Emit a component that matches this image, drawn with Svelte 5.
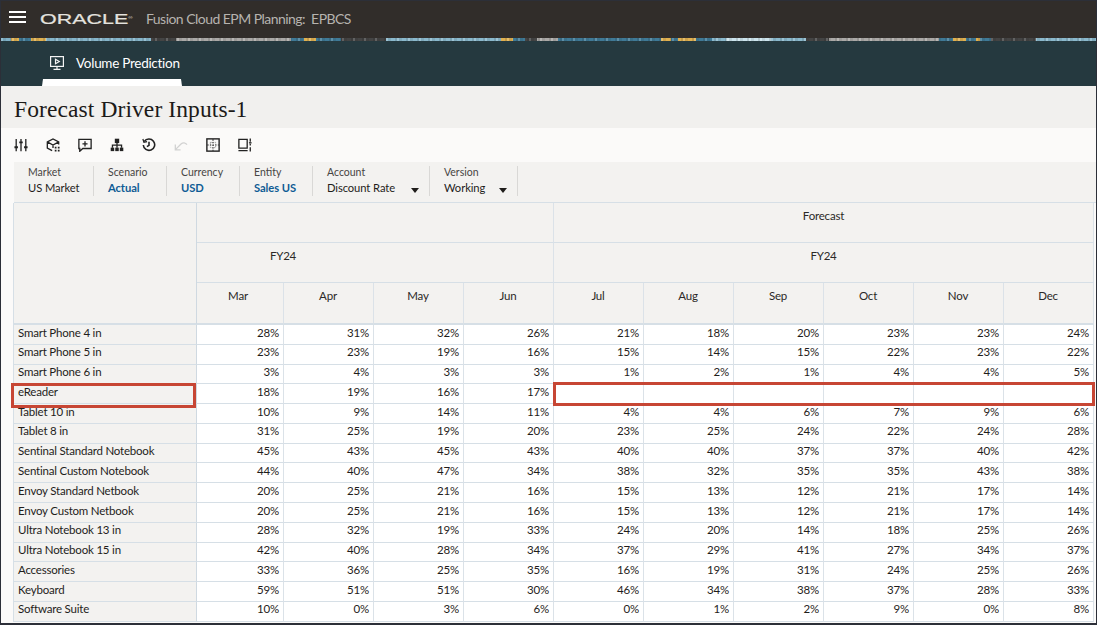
<script>
  const months = ['Mar','Apr','May','Jun','Jul','Aug','Sep','Oct','Nov','Dec'];
  const rows = [
    ['Smart Phone 4 in',[28,31,32,26,21,18,20,23,23,24]],
    ['Smart Phone 5 in',[23,23,19,16,15,14,15,22,23,22]],
    ['Smart Phone 6 in',[3,4,3,3,1,2,1,4,4,5]],
    ['eReader',[18,19,16,17,null,null,null,null,null,null]],
    ['Tablet 10 in',[10,9,14,11,4,4,6,7,9,6]],
    ['Tablet 8 in',[31,25,19,20,23,25,24,22,24,28]],
    ['Sentinal Standard Notebook',[45,43,45,43,40,40,37,37,40,42]],
    ['Sentinal Custom Notebook',[44,40,47,34,38,32,35,35,43,38]],
    ['Envoy Standard Netbook',[20,25,21,16,15,13,12,21,17,14]],
    ['Envoy Custom Netbook',[20,25,21,16,15,13,12,21,17,14]],
    ['Ultra Notebook 13 in',[28,32,19,33,24,20,14,18,25,26]],
    ['Ultra Notebook 15 in',[42,40,28,34,37,29,41,27,34,37]],
    ['Accessories',[33,36,25,35,16,19,31,24,25,26]],
    ['Keyboard',[59,51,51,30,46,34,38,37,28,33]],
    ['Software Suite',[10,0,3,6,0,1,2,9,0,8]],
  ];
  const filters = [
    {label:'Market',value:'US Market',w:80},
    {label:'Scenario',value:'Actual',w:73,link:true},
    {label:'Currency',value:'USD',w:73,link:true},
    {label:'Entity',value:'Sales US',w:73,link:true},
    {label:'Account',value:'Discount Rate',w:117,drop:true},
    {label:'Version',value:'Working',w:88,drop:true},
  ];
</script>

<div class="page">
  <header class="brand">
    <button class="burger" aria-label="Menu"><span></span><span></span><span></span></button>
    <span class="logo">ORACLE<sup>®</sup></span>
    <span class="product">Fusion Cloud EPM Planning:&nbsp; EPBCS</span>
  </header>
  <div class="strip"></div>
  <nav class="tabs">
    <div class="tab">
      <svg width="16" height="16" viewBox="0 0 16 16" fill="none" stroke="#f4f4f4" stroke-width="1.2"><rect x="1.6" y="1.6" width="12.8" height="9.8"/><path d="M6.5 4.2v4.6l3.8-2.3z"/><path d="M8 11.5v2.5M4.5 14.4h7"/></svg>
      <span>Volume Prediction</span>
    </div>
  </nav>
  <div class="tabnub"></div>
  <h1>Forecast Driver Inputs-1</h1>
  <div class="toolbar">
    <svg viewBox="0 0 16 16" fill="none" stroke="#222" stroke-width="1.5"><path d="M2.5 1v14M8 1v14M13.500 1v14"/><path d="M.5 10.500h4M6 5h4M11.500 10.500h4" stroke-width="2.200"/></svg>
    <svg viewBox="0 0 16 16" fill="none" stroke="#222" stroke-width="1.5"><path d="M7 14.500 1.500 11.500V4.500L8 1l6.500 3.500v3M1.500 4.500 8 8l6.500-3.500M8 8v3.500"/><path d="M10 10h2v2h-2zM13.500 10h2v2h-2zM10 13.500h2v2h-2zM13.500 13.500h2v2h-2z" fill="#222" stroke="none"/></svg>
    <svg viewBox="0 0 16 16" fill="none" stroke="#222" stroke-width="1.5"><path d="M1 1.500h14v10.500H5.500L2 15.200V12H1z"/><path d="M8 3.800v5.800M5.100 6.700h5.800"/></svg>
    <svg viewBox="0 0 16 16" fill="none" stroke="#222" stroke-width="1.5"><rect x="5.500" y=".8" width="5" height="5" fill="#222" stroke="none"/><rect x=".8" y="11" width="4" height="4" fill="#222" stroke="none"/><rect x="6" y="11" width="4" height="4" fill="#222" stroke="none"/><rect x="11.200" y="11" width="4" height="4" fill="#222" stroke="none"/><path d="M8 5v6M2.800 11V8.200h10.400V11"/></svg>
    <svg viewBox="0 0 16 16" fill="none" stroke="#222" stroke-width="1.800"><path d="M2.600 4A6.500 6.500 0 1 1 1.500 8"/><path d="M1 1.200 2.200 5l3.600-.9" stroke-width="1.400"/><path d="M8 4.200V8.400l-2.400 1.500"/></svg>
    <svg viewBox="0 0 16 16" fill="none" stroke="#d2d2d2" stroke-width="1.500"><path d="M1.500 7.500V13.500H7.500M1.900 13 8 6.800c2.400-2 5-1.600 6.800.8"/></svg>
    <svg viewBox="0 0 16 16" fill="none" stroke="#222" stroke-width="1.600"><rect x="1" y="1" width="14" height="14"/><path d="M8 1.500v13M1.500 8h13" stroke-width="1.300" stroke-dasharray="1.500 1.500"/><path d="M5 5h6v6H5z" stroke-width=".8" stroke="#777" stroke-dasharray="1.500 1"/></svg>
    <svg viewBox="0 0 16 16" fill="none" stroke="#222" stroke-width="1.500"><path d="M10.500 1.500H1v10h9.500z"/><path d="M.5 14.500h10.500M14 .5v3.800M14 6.500v2M14 10.500v5"/><path d="M12.500 5.500h3"/></svg>
  </div>
  <div class="filters">
    {#each filters as f}
      <div class="filter" style="width:{f.w}px">
        <span class="flabel">{f.label}</span>
        <span class="fvalue" class:link={f.link}>{f.value}</span>
        {#if f.drop}<i class="caret"></i>{/if}
      </div>
    {/each}
  </div>
  <div class="sheet">
    <div class="corner"></div>
    <div class="hd span4"></div>
    <div class="hd span6">Forecast</div>
    <div class="hd span4 year">FY24</div>
    <div class="hd span6">FY24</div>
    {#each months as m, i}<div class="hd month" class:first={i === 0}>{m}</div>{/each}
    {#each rows as r}
      <div class="rowname">{r[0]}</div>
      {#each r[1] as v}<div class="cell">{v === null ? '' : v + '%'}</div>{/each}
    {/each}
    <div class="mark mark-left"></div>
    <div class="mark mark-right"></div>
  </div>
</div>

<style>
  :global(body){margin:0;background:#fbfaf9;}
  .page{width:1097px;height:625px;box-sizing:border-box;border:1px solid #2c2f38;border-bottom-width:2px;background:#fbfaf9;overflow:hidden;font-family:Lato,"Noto Sans",sans-serif;color:#1f1d1b;position:relative;}
  .brand{height:37px;background:#312d2a;display:flex;align-items:center;box-sizing:border-box;padding-left:8px;}
  .burger{width:17px;height:12px;padding:0;border:0;background:none;display:flex;flex-direction:column;justify-content:space-between;margin-top:-5px;}
  .burger span{display:block;height:2px;background:#fff;}
  .logo{font-family:"Liberation Sans",sans-serif;font-size:14.500px;line-height:14px;color:#e4e2df;margin-left:14px;margin-top:-3px;transform-origin:left center;font-weight:400;-webkit-text-stroke:.2px #e4e2df;width:94px;display:inline-block;transform:scaleX(1.48);white-space:nowrap;}
  .logo sup{font-size:4px;vertical-align:5px;-webkit-text-stroke:0;}
  .product{font-size:14px;letter-spacing:-.54px;color:#b6b3af;margin-left:12px;margin-top:-3px;}
  .strip{height:3px;background:repeating-linear-gradient(90deg,rgba(255,255,255,.16) 0 2px,rgba(0,0,0,.08) 2px 5px,rgba(255,255,255,0) 5px 9px,rgba(0,0,0,.12) 9px 11px),linear-gradient(90deg,#7fb0c6 0 10px,#e0b050 10px 18px,#3f7996 18px 30px,#e0b050 30px 45px,#86b5ca 45px 150px,#444 150px 175px,#aaa8a6 175px 290px,#3f7996 290px 303px,#e0b050 303px 315px,#3f7996 315px 340px,#444 340px 385px,#8ab8cc 385px 500px,#e0b050 500px 512px,#3f7996 512px 524px,#444 524px 536px,#aaa8a6 536px 557px,#3f7996 557px 660px,#e0b050 660px 670px,#3f7996 670px 677px,#e0b050 677px 695px,#3f7996 695px 711px,#8ab8cc 711px 725px,#cbe3ec 725px 770px,#8ab8cc 770px 805px,#444 805px 828px,#aaa8a6 828px 938px,#3f7996 938px 952px,#e0b050 952px 965px,#3f7996 965px 975px,#e0b050 975px 979px,#3f7996 979px 990px,#444 990px 1035px,#8ab8cc 1035px);}
  .tabs{height:45px;background:#25393f;padding-left:41px;box-sizing:border-box;}
  .tab{width:139px;height:45px;display:flex;align-items:center;gap:11px;padding:0 0 2px 7px;box-sizing:border-box;color:#fff;font-size:13.500px;letter-spacing:-.28px;white-space:nowrap;}
  .tab svg{flex:none;}
  .tabnub{position:absolute;left:41px;top:78px;width:140px;height:7px;background:#fff;clip-path:polygon(1px 0,139px 0,140px 100%,0 100%);}
  h1{margin:0;height:42px;background:#f1f0ee;box-sizing:border-box;padding:10px 0 0 13px;font:400 23.500px/26px "Liberation Serif",serif;letter-spacing:.1px;color:#1c1a18;}
  .toolbar{height:34px;display:flex;align-items:center;gap:18px;padding-left:13px;}
  .toolbar svg{width:14px;height:14px;flex:none;}
  .filters{height:41px;margin-left:13px;background:#f3f2f0;display:flex;border-bottom:1px solid #d6dfe6;box-sizing:border-box;padding-top:4px;}
  .filter{height:30px;border-right:1px solid #d9d8d6;box-sizing:border-box;padding-left:14px;position:relative;display:flex;flex-direction:column;flex:none;}
  .flabel{font-size:10.500px;line-height:12px;color:#474543;}
  .fvalue{font-size:11.200px;letter-spacing:-.08px;line-height:15px;padding-top:1.500px;color:#1f1d1b;}
  .fvalue.link{color:#0f5c95;font-weight:700;}
  .caret{position:absolute;right:10px;bottom:3px;width:0;height:0;border:4.500px solid transparent;border-top:5px solid #1f1d1b;border-bottom:0;}
  .sheet{margin-left:13px;position:relative;display:grid;grid-template-columns:183px 87px repeat(9,90px);grid-template-rows:40px 40px 42px repeat(15,19.79px);font-size:11.500px;letter-spacing:-.2px;box-shadow:-1px 0 0 #d6dfe6;}
  .corner{grid-row:1 / 4;grid-column:1;background:#f3f2f0;border-right:1px solid #cfd9e1;border-bottom:2px solid #d6dfe6;}
  .hd{background:#f3f2f0;border-right:1px solid #dbe2e8;border-bottom:1px solid #d6dfe6;box-sizing:border-box;text-align:center;padding-top:6px;line-height:14px;color:#2b2927;}
  .span4{grid-column:span 4;}
  .span6{grid-column:span 6;}
  .year{padding-right:184px;}
  .month{padding-right:1px;border-bottom:2px solid #d6dfe6;}
  .month.first{padding-right:4px;}
  .rowname{background:#f3f2f0;padding:.5px 0 0 4px;border-right:1px solid #cfd9e1;border-bottom:1px solid #d6dfe6;line-height:14px;white-space:nowrap;overflow:hidden;box-sizing:border-box;}
  .cell{background:#fff;border-right:1px solid #dbe2e8;border-bottom:1px solid #d6dfe6;text-align:right;padding:.5px 4px 0 0;line-height:14px;box-sizing:border-box;}
  .mark{position:absolute;border:3px solid #c74634;box-sizing:border-box;}
  .mark-left{left:-3px;top:180px;width:185px;height:25px;}
  .mark-right{left:539px;top:179px;width:542px;height:24px;}
</style>
